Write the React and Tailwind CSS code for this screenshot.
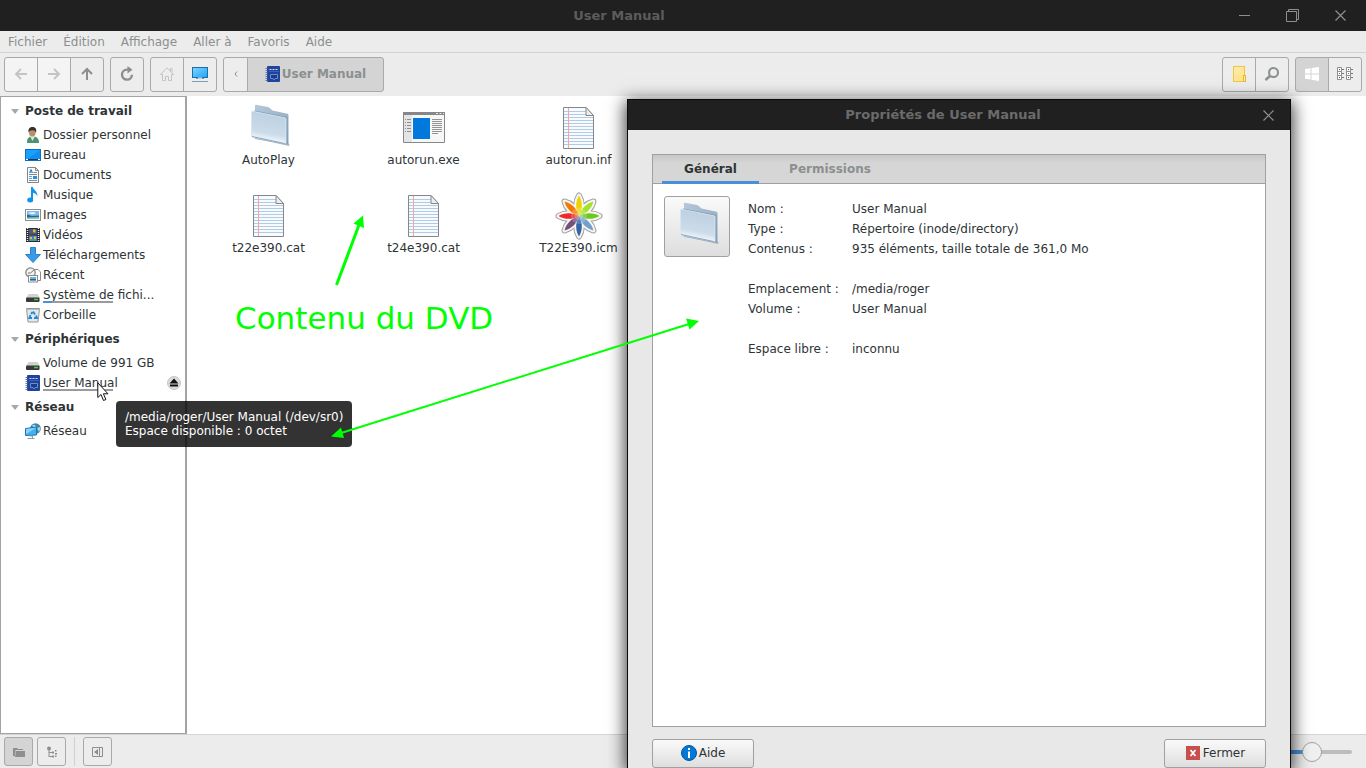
import React from "react";

/* ---------- toolbar icons ---------- */
function ArrowIcon({ className }) {
  return (
    <svg className={className} width="16" height="16" viewBox="0 0 16 16" fill="none" stroke="currentColor" strokeWidth="2">
      <path d="M14 8H3.5M8 3 3 8l5 5" />
    </svg>
  );
}

function ReloadIcon() {
  return (
    <svg width="16" height="16" viewBox="0 0 16 16" fill="none">
      <path d="M9.5 3.6H8a5 5 0 1 0 5 5.2" stroke="#8b8f8f" strokeWidth="2.4" />
      <path d="M8.5 0 13.5 3.8 8.5 7.6z" fill="#8b8f8f" />
    </svg>
  );
}

function HomeIcon() {
  return (
    <svg width="16" height="16" viewBox="0 0 16 16" fill="none" stroke="#c4c4c4">
      <path d="M1.500 8.500 8 1.800l6.500 6.700H12.500v6h-3v-4h-3v4h-3v-6z" />
      <path d="M11.500 5V2.500h1.500v4" />
    </svg>
  );
}

function ComputerIcon() {
  return (
    <svg width="18" height="18" viewBox="0 0 18 18">
      <defs>
        <linearGradient id="screen" x1="0" y1="0" x2="1" y2="1">
          <stop offset="0" stopColor="#8ad3ff" />
          <stop offset="0.5" stopColor="#4dbcff" />
          <stop offset="1" stopColor="#22a4f8" />
        </linearGradient>
      </defs>
      <rect x="1.500" y="2.500" width="15" height="10" fill="url(#screen)" stroke="#1d6ea6" />
      <path d="M5 13.500h8M1 16.500h16" stroke="#7c9fb8" />
      <path d="M7 13h4" stroke="#ffffff" />
    </svg>
  );
}

function BookIcon() {
  return (
    <svg width="16" height="16" viewBox="0 0 16 16">
      <rect x="2" width="13" height="16" rx="1" fill="#20439b" />
      <path d="M1.500 2v13" stroke="#5f78b5" strokeWidth="2" strokeDasharray="1 1" />
      <path d="M4.500 3.500h9" stroke="#d5def5" strokeDasharray="2 1" />
      <path d="M4 5.500h10" stroke="#3b5fb8" />
      <path d="M5.500 8.500h7v4h-2.500l-1 1.500-1-1.500h-2.500z" fill="#1b3a8c" stroke="#6e8bd0" />
    </svg>
  );
}

function NewFolderIcon() {
  return (
    <svg width="16" height="18" viewBox="0 0 16 18">
      <defs>
        <linearGradient id="yellow" x1="0" y1="0" x2="1" y2="1">
          <stop offset="0" stopColor="#ffeeb4" />
          <stop offset="1" stopColor="#ffe07c" />
        </linearGradient>
      </defs>
      <rect x="2.500" y="1.500" width="11" height="15" fill="url(#yellow)" stroke="#efc545" />
      <rect x="12.500" y="10.500" width="2" height="6" fill="#fff0b0" stroke="#e7b82f" />
    </svg>
  );
}

function SearchIcon() {
  return (
    <svg width="16" height="16" viewBox="0 0 16 16" fill="none" stroke="#8b8f8f">
      <circle cx="9.500" cy="6.500" r="4.500" strokeWidth="2" />
      <path d="M6.500 9.500 1.500 14" strokeWidth="2.400" />
    </svg>
  );
}

function WindowsIcon() {
  return (
    <svg width="16" height="16" viewBox="0 0 16 16" fill="#ffffff">
      <path d="M1 3 6.500 2.200V7.500H1zM7.500 2 15 1v6.500H7.500zM1 8.500h5.500v5L1 12.700zM7.500 8.500H15V15l-7.500-1.300z" />
    </svg>
  );
}

function ListViewIcon() {
  return (
    <svg width="18" height="16" viewBox="0 0 18 16">
      {[1, 10].map((x) => (
        <g key={x} transform={`translate(${x} 1)`}>
          <path d="M.5.5h4v4h-4zM.5 4.500h4v4h-4zM.5 8.500h4v4h-4z" fill="#fff" stroke="#8f8f8f" />
          <path d="M2 2.500h1" stroke="#555" />
          <path d="M2 6.500h1" stroke="#3d86c6" />
          <path d="M2 10.500h1" stroke="#b3202a" />
          <path d="M5 2.500h2M5 6.500h2M5 10.500h2" stroke="#777" />
        </g>
      ))}
    </svg>
  );
}

function CloseIcon() {
  return (
    <svg width="11" height="11" viewBox="0 0 11 11" stroke="#8f8f8f" strokeWidth="1.200">
      <path d="M.5.5l10 10M10.500.5l-10 10" />
    </svg>
  );
}

/* ---------- sidebar icons ---------- */
function PersonIcon() {
  return (
    <svg width="16" height="16" viewBox="0 0 16 16">
      <path d="M2 16c0-4 1-6 4-6.500h3c3.500.5 5 2.500 5 6.500z" fill="#4b9470" />
      <path d="M5 9l2.500 5L10 9z" fill="#e6e6dc" />
      <ellipse cx="7.300" cy="5.500" rx="3.300" ry="4" fill="#b98e68" />
      <path d="M3.500 5.500C3 1.500 5 0 7.500 0S12 1.500 11 6c-.6-2-1.300-2.600-3-2.700-2 0-3.500.4-4.500 2.200z" fill="#33302d" />
    </svg>
  );
}

function DesktopIcon() {
  return (
    <svg width="16" height="16" viewBox="0 0 16 16">
      <rect x=".5" y="2.500" width="15" height="11" fill="#18a0fb" stroke="#0c6fc0" />
      <path d="M1 13 15 3v10z" fill="#0f8ff0" />
      <path d="M1 12.500h14" stroke="#123a66" />
      <path d="M1 12.500h2M13 12.500h2" stroke="#fff" />
    </svg>
  );
}

function DocumentIcon() {
  return (
    <svg width="16" height="16" viewBox="0 0 16 16">
      <path d="M2.500.5h8l3 3v12h-11z" fill="#fbfbfb" stroke="#858585" />
      <path d="M10.500.5v3h3" fill="none" stroke="#858585" />
      <path d="M4.500 6 6 2.500 7.500 6M5 5h2" fill="none" stroke="#1587d8" />
      <path d="M8.500 5.500H12M4 7.500h8M4 13.500h8" stroke="#8a8a8a" />
      <path d="M4 9.500h3M4 11.500h3" stroke="#58a6dc" />
      <rect x="8" y="9" width="4" height="3" fill="#2d8ed6" />
    </svg>
  );
}

function MusicIcon() {
  return (
    <svg width="16" height="16" viewBox="0 0 16 16" fill="#0f94ee">
      <path d="M6 0h1.800c.3 3 5.200 3.800 4.500 9.500-.6-2.300-2-3.300-4.300-3.700V13H6z" />
      <ellipse cx="5.200" cy="13" rx="3" ry="2.500" />
    </svg>
  );
}

function PictureIcon() {
  return (
    <svg width="16" height="16" viewBox="0 0 16 16">
      <rect x=".5" y="2.500" width="15" height="11" fill="#fff" stroke="#8d8d8d" />
      <path d="M2 4h12v8H2z" fill="#7db8ee" />
      <path d="M3 6c2-1.500 4 0 6-1l2 1.500-4 .7z" fill="#eef7ff" />
      <path d="M2 7.500 7 9l7-.500V12H2z" fill="#1f6d78" />
      <path d="M2 10.500 14 10v2H2z" fill="#8fc5cf" />
    </svg>
  );
}

function VideoIcon() {
  return (
    <svg width="16" height="16" viewBox="0 0 16 16">
      <path d="M1 1h14v14H1z" fill="#2b2b2b" />
      <path d="M2.500 1v14M13.500 1v14" stroke="#ececec" strokeWidth="1.400" strokeDasharray="1 1" />
      <path d="M4 2h8v5.500H4z" fill="#3a5a9c" />
      <path d="M4 8.500h8V14H4z" fill="#4279d6" />
      <path d="M8 2.500h2.500v3H8zM5 10h2v2H5zM9 9.500h2v2.500H9z" fill="#e6c321" />
      <path d="M4.500 5.500h4v2h-4z" fill="#8c4232" />
      <path d="M5 13h6" stroke="#5fb547" />
    </svg>
  );
}

function DownloadIcon() {
  return (
    <svg width="16" height="16" viewBox="0 0 16 16">
      <path d="M5.500.5h5v7h5L8 15.500.5 7.500h5z" fill="#3a9aea" stroke="#2c82c9" />
    </svg>
  );
}

function RecentIcon() {
  return (
    <svg width="16" height="16" viewBox="0 0 16 16">
      <path d="M8.500 2.500H13l2.500 2.500v8.500h-7z" fill="#fff" stroke="#8b8b8b" />
      <circle cx="5.500" cy="5.500" r="4.700" fill="#f2f2f2" stroke="#868686" strokeWidth="1.300" />
      <path d="M5.500 6 9 3M5.500 6H3" stroke="#777" fill="none" />
      <rect x="3.500" y="8.500" width="9" height="6.500" fill="#fff" stroke="#8b8b8b" />
      <path d="M5 10h6v3.500H5z" fill="#6fb0e6" />
      <path d="M5 12h6v1.500H5z" fill="#1f6d78" />
    </svg>
  );
}

function DriveIcon() {
  return (
    <svg width="16" height="16" viewBox="0 0 16 16">
      <path d="M3.500 7h9L15 11H1z" fill="#d2d2d2" />
      <rect x="1" y="10.500" width="13.500" height="4.500" rx="1" fill="#393939" />
      <path d="M9 12.500h4" stroke="#3fd33a" strokeWidth="1.500" />
    </svg>
  );
}

function TrashIcon() {
  return (
    <svg width="16" height="16" viewBox="0 0 16 16">
      <path d="M1.500 1.500h13l-1.500 13.500H3z" fill="#e4e7e8" stroke="#949899" />
      <path d="M1.500 2.500h13" stroke="#b9bcbd" />
      <path d="M8 4.500l2 3M5.500 8 4.300 11H7M11 8.500l1 2.500H9M6 7l1.500-2" fill="none" stroke="#1d8bdb" strokeWidth="1.900" />
    </svg>
  );
}

function NetworkIcon() {
  return (
    <svg width="16" height="16" viewBox="0 0 16 16">
      <circle cx="10.500" cy="5.500" r="5.300" fill="#3b86a8" />
      <path d="M7 2.500c2-1.500 3-.5 4 .5s-1 2-2 2.500zM12 5l3-1c.6 2 .2 3.500-1 5z" fill="#a9d4e2" />
      <path d="M.5 5.500 11.500 4v8L.5 12.500z" fill="#42b2f5" stroke="#2074a8" />
      <path d="M1 6l10-1.300L1 11z" fill="#8bd1fb" />
      <path d="M4.500 13h3v2M2.500 15.500h7" fill="none" stroke="#7d9fb2" />
    </svg>
  );
}

function EjectIcon() {
  return (
    <svg width="14" height="14" viewBox="0 0 14 14">
      <circle cx="7" cy="7" r="6.500" fill="#dadada" stroke="#c6c6c6" />
      <path d="M7 2.500 11.500 7.500h-9zM3 8.500h8v2H3z" fill="#111" />
    </svg>
  );
}

/* ---------- file icons ---------- */
function FolderIcon() {
  return (
    <svg width="48" height="48" viewBox="0 0 48 48">
      <defs>
        <linearGradient id="folderFront" x1="0.200" y1="0" x2="0" y2="1">
          <stop offset="0" stopColor="#bdd1e2" />
          <stop offset="0.600" stopColor="#cbdbe9" />
          <stop offset="0.850" stopColor="#f7fafc" />
          <stop offset="1" stopColor="#c2d1de" />
        </linearGradient>
        <linearGradient id="folderBack" x1="0" y1="0" x2="1" y2="1">
          <stop offset="0" stopColor="#b4c8da" />
          <stop offset="1" stopColor="#8ba5bc" />
        </linearGradient>
      </defs>
      <path d="M8 34l36 8 .5-1.500-2-2z" fill="#8a99a5" opacity=".7" />
      <path d="M10 1.500Q10 .5 11 .7L23 3q1.500.5 2.500 1.800l2 1.700 15 3.200q1 .3 1 1.300v28.500q0 1.200-1.200 1L10 35z" fill="url(#folderBack)" />
      <path d="M9 7l33 6.500v26" fill="none" stroke="#7b98b1" />
      <path d="M6.500 8q0-1 1-.8l32.500 6.600q1 .2 1 1.200v23.500q0 1.200-1 1L7.500 33q-1-.3-1-1.300z" fill="url(#folderFront)" stroke="#d9e5ef" strokeWidth=".8" />
      <path d="M7 32.500 40 39.600" stroke="#8fa8bd" />
    </svg>
  );
}

function ExeIcon() {
  return (
    <svg width="48" height="48" viewBox="0 0 48 48">
      <path d="M3.500 8.500h41v30h-41z" fill="#f7f7f7" stroke="#86878a" />
      <path d="M3 8h42v3H3z" fill="#86878a" />
      <path d="M36 9.500h2M39.500 9.500h2M43 9.500h1" stroke="#e8e8e8" />
      <path d="M4 11h8v27H4z" fill="#e4e4e4" />
      <path d="M5 15.500h1M7 15.500h4M5 18.500h1M7 18.500h4M5 21.500h1M7 21.500h4M5 24.500h1M7 24.500h4M5 27.500h1M7 27.500h4" stroke="#8e8e8e" />
      <path d="M13 14h17v21H13z" fill="#0078dc" />
      <path d="M32 15.500h10M32 17.500h10M32 19.500h10M32 21.500h10M32 23.500h10M32 25.500h10M32 27.500h10M32 29.500h6" stroke="#939393" />
    </svg>
  );
}

function TextFileIcon() {
  return (
    <svg width="48" height="48" viewBox="0 0 48 48">
      <path d="M8.500 3.500H31l7.500 8v33h-30z" fill="#f9fafb" stroke="#85878a" />
      <path
        d="M9 7.500h22M9 10.500h22M9 13.500h29M9 16.500h29M9 19.500h29M9 22.500h29M9 25.500h29M9 28.500h29M9 31.500h29M9 34.500h29M9 37.500h29M9 40.500h29"
        stroke="#aecbea"
      />
      <path d="M13.500 4v40" stroke="#f3a5a5" />
      <path d="M31 3.500v8h7.500z" fill="#ededed" stroke="#85878a" />
    </svg>
  );
}

const petals = [
  ["#edd400", 0],
  ["#a5e32b", 45],
  ["#6cc81c", 90],
  ["#729fcf", 135],
  ["#3465a4", 180],
  ["#75507b", 225],
  ["#ef2929", 270],
  ["#f57900", 315],
];

function ColorProfileIcon() {
  const petal = "M24 24C20 17 20.500 9 24 3.500 27.500 9 28 17 24 24z";
  return (
    <svg width="48" height="48" viewBox="0 0 48 48">
      {petals.map(([color, angle]) => (
        <path key={color} d={petal} transform={`rotate(${angle} 24 24)`} stroke="#a0a0a0" strokeWidth="6" strokeLinejoin="round" />
      ))}
      {petals.map(([color, angle]) => (
        <path key={color} d={petal} transform={`rotate(${angle} 24 24)`} stroke="#f6f6f4" strokeWidth="4" strokeLinejoin="round" />
      ))}
      {petals.map(([color, angle]) => (
        <path key={color} d={petal} transform={`rotate(${angle} 24 24)`} fill={color} />
      ))}
      <circle cx="24" cy="24" r="8" fill="#fff" opacity=".2" />
      <circle cx="24" cy="24" r="4" fill="#fff" opacity=".2" />
    </svg>
  );
}

/* ---------- data ---------- */
const menus = ["Fichier", "Édition", "Affichage", "Aller à", "Favoris", "Aide"];

const places = [
  {
    title: "Poste de travail",
    items: [
      { label: "Dossier personnel", Icon: PersonIcon },
      { label: "Bureau", Icon: DesktopIcon },
      { label: "Documents", Icon: DocumentIcon },
      { label: "Musique", Icon: MusicIcon },
      { label: "Images", Icon: PictureIcon },
      { label: "Vidéos", Icon: VideoIcon },
      { label: "Téléchargements", Icon: DownloadIcon },
      { label: "Récent", Icon: RecentIcon },
      { label: "Système de fichi...", Icon: DriveIcon, used: 13 },
      { label: "Corbeille", Icon: TrashIcon },
    ],
  },
  {
    title: "Périphériques",
    items: [
      { label: "Volume de 991 GB", Icon: DriveIcon },
      { label: "User Manual", Icon: BookIcon, used: 0, eject: true },
    ],
  },
  { title: "Réseau", items: [{ label: "Réseau", Icon: NetworkIcon }] },
];

const files = [
  { name: "AutoPlay", Icon: FolderIcon },
  { name: "autorun.exe", Icon: ExeIcon },
  { name: "autorun.inf", Icon: TextFileIcon },
  { name: "t22e390.cat", Icon: TextFileIcon },
  { name: "t24e390.cat", Icon: TextFileIcon },
  { name: "T22E390.icm", Icon: ColorProfileIcon },
];

const properties = [
  [
    ["Nom :", "User Manual"],
    ["Type :", "Répertoire (inode/directory)"],
    ["Contenus :", "935 éléments, taille totale de 361,0 Mo"],
  ],
  [
    ["Emplacement :", "/media/roger"],
    ["Volume :", "User Manual"],
  ],
  [["Espace libre :", "inconnu"]],
];

/* ---------- window parts ---------- */
function TitleBar() {
  return (
    <header className="flex h-[31px] shrink-0 items-center bg-[#202020] pr-0.5">
      <h1 className="flex-1 pl-[18px] text-center text-[13px] font-bold text-[#5c5c5c]">User Manual</h1>
      <button className="flex h-full w-12 items-center justify-center" aria-label="Réduire">
        <svg width="11" height="11" viewBox="0 0 11 11" stroke="#8f8f8f">
          <path d="M0 5.500h11" />
        </svg>
      </button>
      <button className="flex h-full w-12 items-center justify-center" aria-label="Restaurer">
        <svg width="13" height="13" viewBox="0 0 13 13" fill="none" stroke="#8f8f8f">
          <path d="M.5 2.500h10v10H.5zM2.500 2.500v-2h10v10h-2" />
        </svg>
      </button>
      <button className="flex h-full w-12 items-center justify-center" aria-label="Fermer">
        <CloseIcon />
      </button>
    </header>
  );
}

function ButtonGroup({ children }) {
  return <div className="flex h-[35px] pl-px">{children}</div>;
}

// neighbours share one border, so every button is pulled a pixel to the left
function ToolButton({ label, active, disabled, width = "w-[34px]", children }) {
  const bg = active ? "bg-[#d4d4d4]" : disabled ? "bg-[#f4f4f4]" : "bg-[#ededed]";
  return (
    <button
      className={`-ml-px flex items-center justify-center border border-[#a9a9a9] pb-px font-bold text-[#8b8f8f] first:rounded-l-[3px] last:rounded-r-[3px] ${width} ${bg}`}
      aria-label={label}
      disabled={disabled}
    >
      {children}
    </button>
  );
}

function Toolbar() {
  return (
    <div className="flex h-[43px] shrink-0 items-start gap-1.5 px-1 pt-1">
      <ButtonGroup>
        <ToolButton label="Précédent" disabled>
          <ArrowIcon className="text-[#c4c4c4]" />
        </ToolButton>
        <ToolButton label="Suivant" disabled>
          <ArrowIcon className="rotate-180 text-[#c4c4c4]" />
        </ToolButton>
        <ToolButton label="Dossier parent">
          <ArrowIcon className="rotate-90" />
        </ToolButton>
      </ButtonGroup>
      <ButtonGroup>
        <ToolButton label="Actualiser">
          <ReloadIcon />
        </ToolButton>
      </ButtonGroup>
      <ButtonGroup>
        <ToolButton label="Dossier personnel">
          <HomeIcon />
        </ToolButton>
        <ToolButton label="Poste de travail">
          <ComputerIcon />
        </ToolButton>
      </ButtonGroup>
      <ButtonGroup>
        <ToolButton label="Chemin précédent" width="w-[25px]">
          <svg width="4" height="6" viewBox="0 0 4 6" fill="none" stroke="#8b8f8f">
            <path d="M3 .5 1 3l2 2.500" />
          </svg>
        </ToolButton>
        <ToolButton label="User Manual" width="w-[137px]" active>
          <span className="flex items-center gap-px">
            <BookIcon />
            User Manual
          </span>
        </ToolButton>
      </ButtonGroup>
      <div className="flex-1" />
      <ButtonGroup>
        <ToolButton label="Nouveau dossier">
          <NewFolderIcon />
        </ToolButton>
        <ToolButton label="Rechercher">
          <SearchIcon />
        </ToolButton>
      </ButtonGroup>
      <ButtonGroup>
        <ToolButton label="Vue en icônes" active>
          <WindowsIcon />
        </ToolButton>
        <ToolButton label="Vue compacte">
          <ListViewIcon />
        </ToolButton>
      </ButtonGroup>
    </div>
  );
}

function Sidebar() {
  return (
    <nav className="w-[187px] shrink-0 border border-r-2 border-[#a3a3a3] bg-white">
      {places.map((section) => (
        <section key={section.title}>
          <h2 className="flex h-7 items-center gap-1.5 pl-[10px] font-bold">
            <svg width="8" height="5" viewBox="0 0 8 5" fill="#a8a8a8">
              <path d="M0 0h8L4 5z" />
            </svg>
            {section.title}
          </h2>
          <ul>
            {section.items.map(({ label, Icon, used, eject }) => (
              <li key={label} className="flex h-5 items-center pr-1 pl-6">
                <a href="#" className="flex flex-1 items-center gap-0.5">
                  <Icon />
                  <span className="relative leading-5">
                    {label}
                    {used !== undefined && (
                      <span className="absolute bottom-0.5 left-0 h-0.5 w-[70px] bg-[#9b9b9f]">
                        <span className="block h-0.5 bg-[#4a90d9]" style={{ width: `${used}%` }} />
                      </span>
                    )}
                  </span>
                </a>
                {eject && (
                  <button aria-label="Éjecter">
                    <EjectIcon />
                  </button>
                )}
              </li>
            ))}
          </ul>
        </section>
      ))}
    </nav>
  );
}

function StatusBar() {
  return (
    <footer className="flex h-[34px] shrink-0 items-center gap-1 border-t border-[#d4d4d4] px-1">
      <button className="flex size-[29px] items-center justify-center rounded-[3px] border border-[#a9a9a9] bg-[#d4d4d4]" aria-label="Emplacements">
        <svg width="12" height="12" viewBox="0 0 12 12" fill="#8b8f8f">
          <path d="M0 2h4l1 1h5v1H2.500v6H0z" />
          <path d="M3 5h9v6H1.500L3 9z" />
        </svg>
      </button>
      <button className="flex size-[29px] items-center justify-center rounded-[3px] border border-[#a9a9a9]" aria-label="Arborescence">
        <svg width="12" height="12" viewBox="0 0 12 12" fill="#8b8f8f">
          <circle cx="3" cy="2.500" r="2" />
          <path d="M2.500 3h1v7h3v1h-4zM3 6h3v1H3z" />
          <path d="M6 5.500h2v2H6zM6 9.500h2v2H6zM9 4h1.500v1.500H9zM9 7h2v1.500H9zM9 9.500h1.500V11H9z" />
        </svg>
      </button>
      <div className="ml-1 h-[29px] w-px bg-[#d0d0d0]" />
      <button className="ml-1 flex size-[29px] items-center justify-center rounded-[3px] border border-[#a9a9a9]" aria-label="Masquer le panneau latéral">
        <svg width="11" height="10" viewBox="0 0 11 10" fill="#8b8f8f">
          <path d="M.5.500h10v9H.5z" fill="none" stroke="#8b8f8f" />
          <path d="M6 2v6L2 5zM7 1h1v8H7z" />
        </svg>
      </button>
      <div className="flex-1" />
      <input
        type="range"
        aria-label="Niveau de zoom"
        min="0"
        max="80"
        defaultValue="50"
        className="mr-[10px] h-1 w-[100px] appearance-none rounded-full bg-[linear-gradient(to_right,#4a90d9_60%,#bdbdbd_60%)] [&::-webkit-slider-thumb]:size-5 [&::-webkit-slider-thumb]:appearance-none [&::-webkit-slider-thumb]:rounded-full [&::-webkit-slider-thumb]:border [&::-webkit-slider-thumb]:border-[#a0a0a0] [&::-webkit-slider-thumb]:bg-[#f0f0f0]"
      />
    </footer>
  );
}

function DialogButton({ children }) {
  return (
    <button className="flex h-[29px] w-[102px] items-center justify-center gap-0.5 rounded-[3px] border border-[#a0a0a0] bg-linear-to-b from-[#fafafa] to-[#dedede] pb-0.5">
      {children}
    </button>
  );
}

function PropertiesDialog() {
  return (
    <div
      role="dialog"
      aria-label="Propriétés de User Manual"
      className="absolute top-[99px] bottom-0 left-[627px] flex w-[664px] flex-col border-x border-t border-[#0a0a0a] bg-[#e8e8e8] shadow-[0_4px_16px_2px_rgba(0,0,0,0.75)]"
    >
      <header className="flex h-[30px] shrink-0 items-center bg-[#202020]">
        <h2 className="flex-1 text-center text-[13px] font-bold text-[#6b6b6b]">Propriétés de User Manual</h2>
        <button className="mr-3 flex w-5 justify-center" aria-label="Fermer">
          <CloseIcon />
        </button>
      </header>
      <div className="flex flex-1 flex-col gap-3 px-6 pt-6">
        <div className="flex flex-1 flex-col border border-[#a0a0a0] bg-white">
          <div className="flex h-[29px] shrink-0 gap-2 border-b border-[#a0a0a0] bg-[linear-gradient(#c6c6c6,#d6d6d6_8px)] pl-[9px]" role="tablist">
            <button role="tab" aria-selected="true" className="relative w-[97px] font-bold">
              Général
              <span className="absolute inset-x-0 -bottom-px h-[3px] bg-[#4a90d9]" />
            </button>
            <button role="tab" aria-selected="false" className="w-[126px] font-bold text-[#8b8f8f]">
              Permissions
            </button>
          </div>
          <div className="flex items-start py-3 pl-[11px]">
            <button
              className="flex h-[61px] w-[66px] items-center justify-center rounded-[3px] border border-[#a0a0a0] bg-linear-to-b from-[#fafafa] to-[#dedede] pb-0.5 pl-0.5"
              aria-label="Choisir une icône"
            >
              <FolderIcon />
            </button>
            <div className="flex flex-col gap-5 pt-[3px] pl-[18px]">
              {properties.map((group, i) => (
                <dl key={i} className="grid grid-cols-[104px_1fr] leading-5">
                  {group.map(([name, value]) => (
                    <React.Fragment key={name}>
                      <dt>{name}</dt>
                      <dd>{value}</dd>
                    </React.Fragment>
                  ))}
                </dl>
              ))}
            </div>
          </div>
        </div>
        <div className="flex justify-between">
          <DialogButton>
            <svg width="16" height="16" viewBox="0 0 16 16">
              <circle cx="8" cy="8" r="7.500" fill="#0078d7" stroke="#0b5596" />
              <path d="M7 3h2v2H7zM7 6.500h2V13H7z" fill="#fff" />
            </svg>
            Aide
          </DialogButton>
          <DialogButton>
            <svg width="16" height="16" viewBox="0 0 16 16">
              <path d="M1 1h14v14H1z" fill="#c94f4f" />
              <path d="M5.500 5l5 6M10.500 5l-5 6" stroke="#fff" strokeWidth="1.800" />
            </svg>
            Fermer
          </DialogButton>
        </div>
      </div>
    </div>
  );
}

/* ---------- annotations drawn over the windows ---------- */
function Annotations() {
  return (
    <>
      <p className="pointer-events-none absolute top-[298px] left-[235px] text-[31px] leading-10 text-[#00ff00]">Contenu du DVD</p>
      <svg className="pointer-events-none absolute top-0 left-0" width="720" height="460" viewBox="0 0 720 460" fill="#00ff00" stroke="#00ff00">
        <path d="M336.500 285 359 225" strokeWidth="3" />
        <path d="M363 215.500 353.500 223.500 364 228z" stroke="none" />
        <path d="M341 433 689 324" strokeWidth="2" />
        <path d="M699 321 686 318.500 689.500 329.500zM331 436.500 341 427.500 344 438z" stroke="none" />
      </svg>
    </>
  );
}

export default function App() {
  return (
    <div className="relative flex h-screen flex-col overflow-hidden bg-[#ececec] font-['DejaVu_Sans',sans-serif] text-[12px] text-[#2e3436]">
      <TitleBar />
      <nav className="flex h-[22px] shrink-0 items-center gap-4 border-b border-[#d2d2d2] pl-2 text-[#8b8f8f]">
        {menus.map((menu) => (
          <button key={menu}>{menu}</button>
        ))}
      </nav>
      <Toolbar />
      <div className="flex min-h-0 flex-1">
        <Sidebar />
        <main className="flex-1 bg-white pt-2 pl-1">
          <ul className="grid grid-cols-[repeat(3,155px)] gap-y-6">
            {files.map(({ name, Icon }) => (
              <li key={name} className="flex flex-col items-center leading-4">
                <Icon />
                {name}
              </li>
            ))}
          </ul>
        </main>
      </div>
      <StatusBar />
      <PropertiesDialog />

      {/* tooltip and mouse pointer */}
      <div role="tooltip" className="absolute top-[401px] left-[116px] rounded bg-black/80 p-[9px] leading-[14px] text-white">
        <p>/media/roger/User Manual (/dev/sr0)</p>
        <p>Espace disponible : 0 octet</p>
      </div>
      <svg className="absolute top-[382px] left-[97px]" width="13" height="20" viewBox="0 0 13 20">
        <path d="M.8.800v14.700l3.200-3 2.500 6 2.400-1-2.500-5.700h4.600z" fill="#fff" stroke="#111" />
      </svg>
      <Annotations />
    </div>
  );
}
